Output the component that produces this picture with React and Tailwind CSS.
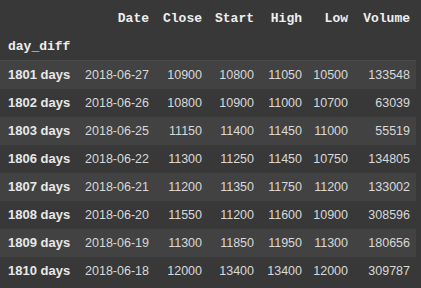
import React from 'react';

const rows = [
  ['1801 days', '2018-06-27', 10900, 10800, 11050, 10500, 133548],
  ['1802 days', '2018-06-26', 10800, 10900, 11000, 10700, 63039],
  ['1803 days', '2018-06-25', 11150, 11400, 11450, 11000, 55519],
  ['1806 days', '2018-06-22', 11300, 11250, 11450, 10750, 134805],
  ['1807 days', '2018-06-21', 11200, 11350, 11750, 11200, 133002],
  ['1808 days', '2018-06-20', 11550, 11200, 11600, 10900, 308596],
  ['1809 days', '2018-06-19', 11300, 11850, 11950, 11300, 180656],
  ['1810 days', '2018-06-18', 12000, 13400, 13400, 12000, 309787],
];

const cols = ['Date', 'Close', 'Start', 'High', 'Low', 'Volume'];
const grid = 'grid grid-cols-[78px_77px_53px_52px_48px_46px_62px] h-[28px] items-center';

export default function App() {
  return (
    <div className="w-[421px] h-[288px] bg-[#383838] pt-[5px] overflow-hidden">
      <div className="w-[416px]">
        <div className={`${grid} font-['Liberation_Mono',monospace] font-bold text-[13px] text-[#eeeeee]`}>
          <div />
          {cols.map((c) => (
            <div key={c} className="text-right pr-[6px]">{c}</div>
          ))}
        </div>
        <div className={`${grid} font-['Liberation_Mono',monospace] font-bold text-[13px] text-[#eeeeee] border-b border-[#4c4c4c]`}>
          <div className="pl-[8px]">day_diff</div>
        </div>
        {rows.map((r, i) => (
          <div
            key={r[0]}
            className={`${grid} font-['Liberation_Sans',sans-serif] text-[12.5px] text-[#d8d8d8] ${i % 2 === 0 ? 'bg-[#424242]' : 'bg-[#383838]'}`}
          >
            <div className="pl-[8px] font-bold text-[13px] text-[#e8e8e8]">{r[0]}</div>
            {r.slice(1).map((v, j) => (
              <div key={j} className="text-right pr-[6px]">{v}</div>
            ))}
          </div>
        ))}
      </div>
    </div>
  );
}
